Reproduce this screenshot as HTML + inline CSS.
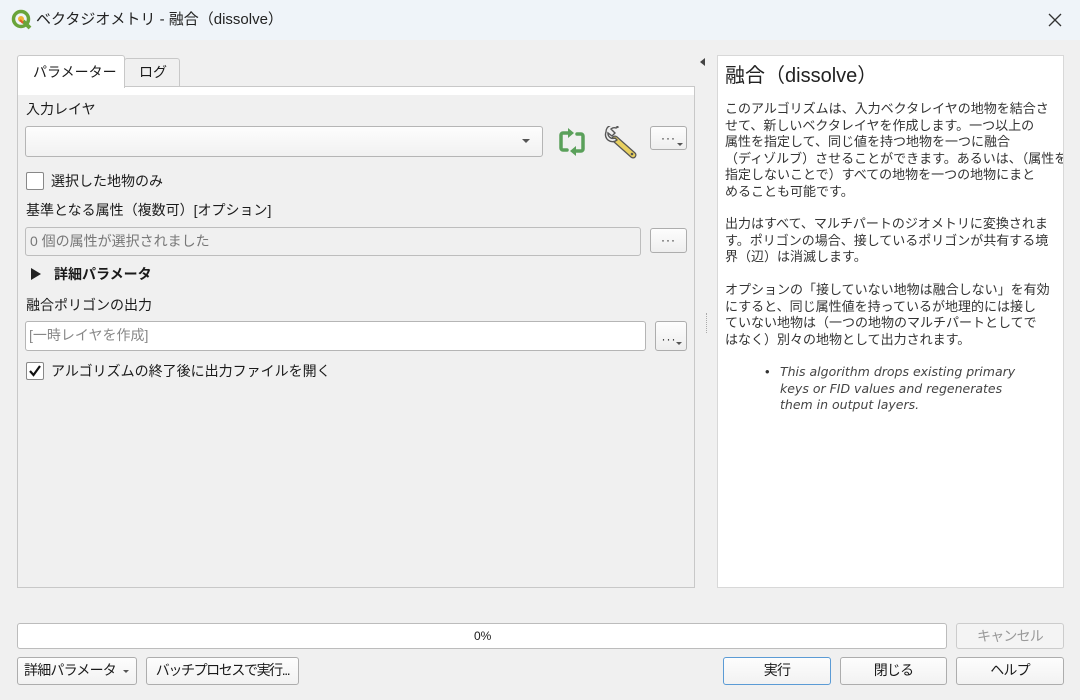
<!DOCTYPE html>
<html><head><meta charset="utf-8"><style>
*{box-sizing:border-box;margin:0;padding:0}
body{width:1080px;height:700px;background:#f0f0f0;font-family:"Liberation Sans","Noto Sans CJK JP",sans-serif;font-size:14px;color:#1a1a1a;position:relative;overflow:hidden}
.a{position:absolute;white-space:nowrap}
.t{line-height:18px}
.btn{position:absolute;border:1px solid #adadad;border-radius:3px;background:linear-gradient(#fdfdfd,#f2f2f2);text-align:center;font-size:14px;line-height:25px;white-space:nowrap;letter-spacing:-0.8px}
.dots{position:absolute;border:1px solid #adadad;border-radius:3px;background:linear-gradient(#fdfdfd,#eeeeee)}
.dots span{position:absolute;left:0;right:0;top:4px;text-align:center;font-size:12px;letter-spacing:1px}
.arr{position:absolute;width:0;height:0;border-left:4px solid transparent;border-right:4px solid transparent;border-top:4px solid #555}
.help{position:absolute;left:717px;top:55px;width:347px;height:533px;background:#fff;border:1px solid #d8d8d8;overflow:hidden}
.help p{position:absolute;left:7px;font-size:13px;line-height:16.5px;color:#333;white-space:nowrap}
</style></head><body>
<div class="a" style="left:0;top:0;width:1080px;height:40px;background:#eff4f9"></div>
<svg class="a" style="left:11px;top:9px" width="22" height="22" viewBox="0 0 22 22"><circle cx="10" cy="10" r="7.5" fill="none" stroke="#6aa43a" stroke-width="3.5"/><path d="M12 12 L19 19" stroke="#6aa43a" stroke-width="4"/><circle cx="10" cy="10" r="3" fill="#f2b336"/><path d="M9 11 l3 3" stroke="#e05a2a" stroke-width="2"/></svg>
<div class="a t" style="left:36px;top:11px;font-size:15px;color:#222">ベクタジオメトリ - 融合（dissolve）</div>
<svg class="a" style="left:1047px;top:12px" width="16" height="16" viewBox="0 0 16 16"><path d="M2 2L14 14M14 2L2 14" stroke="#333" stroke-width="1.3"/></svg>

<div class="a" style="left:124px;top:58px;width:56px;height:29px;background:#f0f0f0;border:1px solid #c8c8c8;border-bottom:none;border-radius:3px 3px 0 0"></div>
<div class="a t" style="left:139px;top:63px">ログ</div>
<div class="a" style="left:17px;top:86px;width:678px;height:502px;border:1px solid #c8c8c8;background:#fff"></div>
<div class="a" style="left:18px;top:95px;width:676px;height:492px;background:#f0f0f0"></div>
<div class="a" style="left:17px;top:55px;width:108px;height:33px;background:#fff;border:1px solid #c8c8c8;border-bottom:none;border-radius:3px 3px 0 0"></div>
<div class="a t" style="left:33px;top:63px">パラメーター</div>

<div class="a t" style="left:26px;top:100px">入力レイヤ</div>
<div class="a" style="left:25px;top:126px;width:518px;height:31px;border:1px solid #b5b5b5;border-radius:3px;background:linear-gradient(#fdfdfd,#f1f1f1)"></div>
<div class="arr" style="left:522px;top:139px"></div>
<svg class="a" style="left:556px;top:128px" width="32" height="28" viewBox="0 0 32 28"><g fill="none" stroke="#5aa05a" stroke-width="3.5" stroke-linejoin="round" stroke-linecap="round"><path d="M12 5H7a2 2 0 0 0-2 2v13a2 2 0 0 0 2 2h4"/><path d="M20 23h5a2 2 0 0 0 2-2V8a2 2 0 0 0-2-2h-4"/></g><path d="M12 0l6 5-6 5z" fill="#5aa05a"/><path d="M20 18l-6 5 6 5z" fill="#5aa05a"/></svg>
<svg class="a" style="left:602px;top:126px" width="36" height="34" viewBox="0 0 36 34"><path d="M13 13L31 29" stroke="#555" stroke-width="7" stroke-linecap="round"/><path d="M13 13L31 29" stroke="#e8d060" stroke-width="4.5" stroke-linecap="round"/><circle cx="30" cy="28" r="1.3" fill="#555"/><path d="M4 6 a7 7 0 0 0 11 8 l-2-2 a5 5 0 0 1-7-5 l4 3 3-3-4-4 a5 5 0 0 1 5 -1 l2-1 a7 7 0 0 0-12 5z" fill="#eee" stroke="#555" stroke-width="1.4"/></svg>
<div class="dots" style="left:650px;top:126px;width:37px;height:24px"><span>···</span></div>
<div class="arr" style="left:677px;top:143px;border-width:3px 3px 0 3px"></div>

<div class="a" style="left:26px;top:172px;width:18px;height:18px;border:1px solid #888;background:#fff;border-radius:2px"></div>
<div class="a t" style="left:51px;top:172px">選択した地物のみ</div>
<div class="a t" style="left:26px;top:201px">基準となる属性（複数可）[オプション]</div>
<div class="a" style="left:25px;top:227px;width:616px;height:29px;border:1px solid #bdbdbd;border-radius:3px;background:#f0f0f0"></div>
<div class="a t" style="left:30px;top:232px;color:#777">0 個の属性が選択されました</div>
<div class="dots" style="left:650px;top:228px;width:37px;height:25px"><span>···</span></div>

<svg class="a" style="left:30px;top:267px" width="12" height="14"><path d="M1 1L11 7L1 13z" fill="#222"/></svg>
<div class="a t" style="left:54px;top:265px;font-weight:bold">詳細パラメータ</div>
<div class="a t" style="left:26px;top:296px">融合ポリゴンの出力</div>
<div class="a" style="left:25px;top:321px;width:621px;height:30px;border:1px solid #b5b5b5;border-radius:3px;background:#fff"></div>
<div class="a t" style="left:29px;top:326px;color:#888">[一時レイヤを作成]</div>
<div class="dots" style="left:655px;top:321px;width:32px;height:30px"><span style="top:10px;left:-4px">···</span></div>
<div class="arr" style="left:676px;top:342px;border-width:3px 3px 0 3px"></div>
<div class="a" style="left:26px;top:362px;width:18px;height:18px;border:1px solid #888;background:#fff;border-radius:2px"></div>
<svg class="a" style="left:27px;top:363px" width="16" height="16"><path d="M3 8l3.5 4L13 3" fill="none" stroke="#111" stroke-width="2.2"/></svg>
<div class="a t" style="left:51px;top:362px">アルゴリズムの終了後に出力ファイルを開く</div>

<svg class="a" style="left:699px;top:57px" width="8" height="10"><path d="M6 1L1 5L6 9z" fill="#444"/></svg>
<div class="a" style="left:706px;top:313px;width:1px;height:20px;border-left:1px dotted #aaa"></div>

<div class="help">
<p style="top:8px;font-size:20px;line-height:24px;color:#222">融合（dissolve）</p>
<p style="top:45px">このアルゴリズムは、入力ベクタレイヤの地物を結合さ<br>せて、新しいベクタレイヤを作成します。一つ以上の<br>属性を指定して、同じ値を持つ地物を一つに融合<br>（ディゾルブ）させることができます。あるいは、（属性を<br>指定しないことで）すべての地物を一つの地物にまと<br>めることも可能です。</p>
<p style="top:160px">出力はすべて、マルチパートのジオメトリに変換されま<br>す。ポリゴンの場合、接しているポリゴンが共有する境<br>界（辺）は消滅します。</p>
<p style="top:226px">オプションの「接していない地物は融合しない」を有効<br>にすると、同じ属性値を持っているが地理的には接し<br>ていない地物は（一つの地物のマルチパートとしてで<br>はなく）別々の地物として出力されます。</p>
<p style="top:308px;left:47px;font-size:13px">•</p>
<p style="top:308px;left:62px;font-family:'DejaVu Sans',sans-serif;font-size:12.5px;font-style:italic;color:#444">This algorithm drops existing primary<br>keys or FID values and regenerates<br>them in output layers.</p>
</div>

<div class="a" style="left:17px;top:623px;width:930px;height:26px;border:1px solid #bcbcbc;border-radius:3px;background:#fff"></div>
<div class="a t" style="left:474px;top:627px;font-size:12px">0%</div>
<div class="btn" style="left:956px;top:623px;width:108px;height:26px;color:#999;border-color:#ccc;background:#f4f4f4">キャンセル</div>
<div class="btn" style="left:17px;top:657px;width:120px;height:28px;text-align:left;padding-left:6px">詳細パラメータ</div>
<div class="arr" style="left:123px;top:670px;border-width:3px 3px 0 3px"></div>
<div class="btn" style="left:146px;top:657px;width:153px;height:28px;letter-spacing:-1.4px">バッチプロセスで実行...</div>
<div class="btn" style="left:723px;top:657px;width:108px;height:28px;border-color:#5b9bd5">実行</div>
<div class="btn" style="left:840px;top:657px;width:107px;height:28px">閉じる</div>
<div class="btn" style="left:956px;top:657px;width:108px;height:28px">ヘルプ</div>
</body></html>
